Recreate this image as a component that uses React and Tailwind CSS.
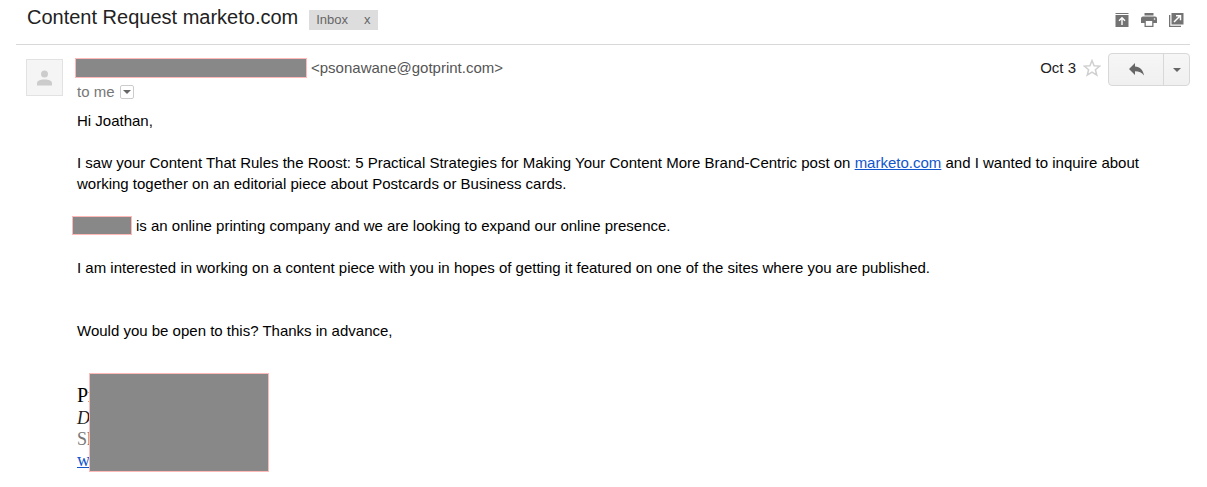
import React from "react";

const iconButton = "flex h-4 w-4 items-center justify-center text-[#737373]";

function ArchiveIcon() {
  return (
    <svg width="14" height="14" viewBox="0 0 14 14" aria-hidden="true">
      <path d="M.5 0h13v1H.5z" fill="currentColor" />
      <path d="M.5 2h13v12H.5z" fill="currentColor" />
      <path d="M7 12V5M4 7.8l3-3 3 3" fill="none" stroke="#fff" strokeWidth="1.4" />
    </svg>
  );
}

function PrintIcon() {
  return (
    <svg width="16" height="14" viewBox="0 0 16 14" aria-hidden="true">
      <path d="M3.5 0h9v2.5h-9z" fill="currentColor" />
      <path d="M2 3.5h12a2 2 0 0 1 2 2V10h-3.5v4h-9v-4H0V5.5a2 2 0 0 1 2-2z" fill="currentColor" />
      <path d="M4.8 8h6.4v4.8H4.8z" fill="#fff" />
      <circle cx="13.5" cy="6" r=".8" fill="#fff" />
    </svg>
  );
}

function NewWindowIcon() {
  return (
    <svg width="15" height="14" viewBox="0 0 15 14" aria-hidden="true">
      <path d="M0 2h1.3v10.7H12V14H0z" fill="currentColor" />
      <path d="M2.5 0h12v11.5h-12z" fill="currentColor" />
      <path d="M5 9l6-6M7 2.8h4.5v4.5" fill="none" stroke="#fff" strokeWidth="1.5" />
    </svg>
  );
}

function CaretIcon() {
  return (
    <svg width="8" height="4" viewBox="0 0 8 4" aria-hidden="true">
      <path d="M0 0h8L4 4z" fill="#666" />
    </svg>
  );
}

function Header() {
  return (
    <header className="flex h-[45px] items-start justify-between border-b border-[#d8d8d8] pl-[11px] pr-[6px]">
      <div className="flex items-start gap-[11px] pt-[7px]">
        <h1 className="text-[20px] leading-5 text-[#222]">Content Request marketo.com</h1>
        <div className="mt-[3px] flex h-5 items-center gap-4 bg-[#ddd] px-[7px] text-[13px] leading-5 text-[#666]">
          <span>Inbox</span>
          <button type="button" aria-label="Remove label Inbox">x</button>
        </div>
      </div>
      <div className="flex gap-[11px] pt-3">
        <button type="button" aria-label="Archive" className={iconButton}>
          <ArchiveIcon />
        </button>
        <button type="button" aria-label="Print all" className={iconButton}>
          <PrintIcon />
        </button>
        <button type="button" aria-label="In new window" className={iconButton}>
          <NewWindowIcon />
        </button>
      </div>
    </header>
  );
}

function Avatar() {
  return (
    <div className="mt-[14px] flex h-[37px] w-[37px] shrink-0 items-center justify-center border border-[#e2e2e2] bg-[#f5f5f5]">
      <svg width="15" height="16" viewBox="0 0 15 16" fill="#ccc" aria-hidden="true">
        <circle cx="7.5" cy="4" r="3.5" />
        <path d="M0 15.5v-2C0 10.500 3 9.500 7.500 9.500s7.500 1 7.500 4v2z" />
      </svg>
    </div>
  );
}

function Actions() {
  return (
    <div className="flex shrink-0 items-start pt-2">
      <time className="mt-1 text-[15px] leading-[21px] text-[#222]">Oct 3</time>
      <button type="button" aria-label="Star" className="mx-[7px] mt-[6px]">
        <svg width="18" height="18" viewBox="0 0 18 18" aria-hidden="true">
          <path
            d="M9 1.5l2.100 5.200 5.600.4-4.300 3.600 1.400 5.500L9 13.200l-4.800 3 1.400-5.500L1.300 7.100l5.600-.4z"
            fill="#fff"
            stroke="#d0d0d0"
            strokeWidth="1.5"
          />
        </svg>
      </button>
      <div className="flex h-[33px] w-[82px] rounded-sm border border-[#d8d8d8] bg-linear-to-b from-[#f6f6f6] to-[#f0f0f0]">
        <button type="button" aria-label="Reply" className="flex flex-1 items-center justify-center">
          <svg width="15" height="13" viewBox="0 0 15 13" aria-hidden="true">
            <path d="M6 0v3.500c5 .3 8 3.500 9 9C12.800 9.600 10 8.300 6 8.300V12L0 6z" fill="#666" />
          </svg>
        </button>
        <button
          type="button"
          aria-label="More"
          className="flex w-[26px] items-center justify-center border-l border-[#d8d8d8]"
        >
          <CaretIcon />
        </button>
      </div>
    </div>
  );
}

function Sender() {
  return (
    <div className="flex items-start justify-between">
      <div>
        <div className="flex items-end pt-3">
          <span className="-ml-0.5 h-5 w-[232px] border border-[#ffb9b9] bg-[#888]" />
          <span className="ml-1 text-[15px] leading-[21px] text-[#555]">&lt;psonawane@gotprint.com&gt;</span>
        </div>
        <div className="mt-[3px] flex items-center gap-[5px] text-[15px] leading-[21px] text-[#777]">
          <span>to me</span>
          <button
            type="button"
            aria-label="Show details"
            className="flex h-[14px] w-[14px] items-center justify-center rounded-xs border border-[#ccc]"
          >
            <CaretIcon />
          </button>
        </div>
      </div>
      <Actions />
    </div>
  );
}

function Signature() {
  return (
    <div className="relative mt-[42px] font-['Liberation_Serif',serif]">
      <p className="text-[20px] leading-6 text-black">Pr</p>
      <p className="text-[18px] leading-[22px] text-[#222] italic">D</p>
      <p className="text-[18px] leading-[21px] text-[#777]">Sh</p>
      <p className="text-[18px] leading-[21px]">
        <a href="#website" className="text-[#15c] underline">w</a>
      </p>
      {/* covers the contact details */}
      <div className="absolute -top-[10px] left-3 h-[99px] w-[180px] border border-[#ffb9b9] bg-[#888]" />
    </div>
  );
}

function Body() {
  return (
    <div className="text-[15px] leading-[21px] text-black">
      <p>Hi Joathan,</p>
      <p className="mt-[21px]">
        I saw your Content That Rules the Roost: 5 Practical Strategies for Making Your Content More
        Brand-Centric post on{" "}
        <a href="#marketo" className="text-[#15c] underline">marketo.com</a> and I wanted to inquire about
        working together on an editorial piece about Postcards or Business cards.
      </p>
      <p className="mt-[21px] flex items-center">
        <span className="-ml-[5px] mr-1 h-[19px] w-[60px] border border-[#ffb9b9] bg-[#888]" />
        is an online printing company and we are looking to expand our online presence.
      </p>
      <p className="mt-[21px]">
        I am interested in working on a content piece with you in hopes of getting it featured on one of the
        sites where you are published.
      </p>
      <p className="mt-[42px]">Would you be open to this? Thanks in advance,</p>
      <Signature />
    </div>
  );
}

export default function App() {
  return (
    <main className="min-h-screen bg-white pl-4 pr-[17px] font-['Liberation_Sans',Arial,sans-serif]">
      <Header />
      <article className="flex items-start gap-[14px] pl-[10px]">
        <Avatar />
        <div className="min-w-0 flex-1">
          <Sender />
          <div className="mt-2 pr-10">
            <Body />
          </div>
        </div>
      </article>
    </main>
  );
}
